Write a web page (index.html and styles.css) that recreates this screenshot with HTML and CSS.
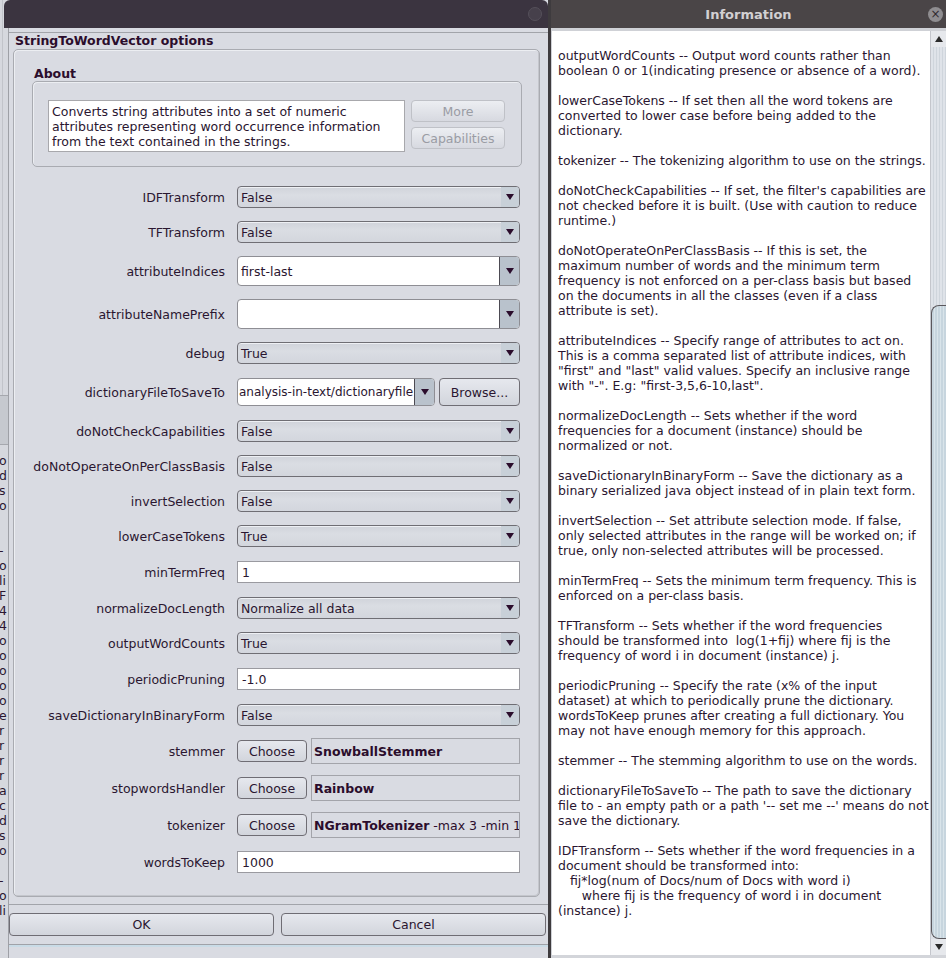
FILE: index.html
```html
<!DOCTYPE html>
<html>
<head>
<meta charset="utf-8">
<title>StringToWordVector options</title>
<link rel="stylesheet" href="styles.css">
</head>
<body>
<div class="screen">
  <div class="strip">
    <div class="strip-top"></div>
    <div class="strip-mid"></div>
    <div class="strip-text">o
d
s
o


-
o
li
F
4
4
o
o
o
o
o
e
r
r
r
r
a
c
d
s
o

-
o
li</div>
  </div>

  <div class="dialog">
    <div class="titlebar"><span class="tb-close"></span></div>
    <div class="dlg-body">
      <div class="opt-title">StringToWordVector options</div>
      <div class="panel">
        <div class="about-title">About</div>
        <div class="about-box">
          <div class="about-text">Converts string attributes into a set of numeric<br>attributes representing word occurrence information<br>from the text contained in the strings.</div>
          <div class="about-btns">
            <div class="btn disabled">More</div>
            <div class="btn disabled">Capabilities</div>
          </div>
        </div>

        <div class="props">
          <div class="lbl">IDFTransform</div>
          <div class="combo"><span class="val">False</span><span class="arrow"><i class="tri"></i></span></div>

          <div class="lbl">TFTransform</div>
          <div class="combo"><span class="val">False</span><span class="arrow"><i class="tri"></i></span></div>

          <div class="lbl">attributeIndices</div>
          <div class="ecombo"><span class="val">first-last</span><span class="earrow"><i class="tri"></i></span></div>

          <div class="lbl">attributeNamePrefix</div>
          <div class="ecombo"><span class="val"></span><span class="earrow"><i class="tri"></i></span></div>

          <div class="lbl">debug</div>
          <div class="combo"><span class="val">True</span><span class="arrow"><i class="tri"></i></span></div>

          <div class="lbl">dictionaryFileToSaveTo</div>
          <div class="filerow">
            <div class="ecombo dict"><span class="val clipped"><span class="shift">analysis-in-text/dictionaryfile</span></span><span class="earrow"><i class="tri"></i></span></div>
            <div class="btn browse">Browse...</div>
          </div>

          <div class="lbl">doNotCheckCapabilities</div>
          <div class="combo"><span class="val">False</span><span class="arrow"><i class="tri"></i></span></div>

          <div class="lbl">doNotOperateOnPerClassBasis</div>
          <div class="combo"><span class="val">False</span><span class="arrow"><i class="tri"></i></span></div>

          <div class="lbl">invertSelection</div>
          <div class="combo"><span class="val">False</span><span class="arrow"><i class="tri"></i></span></div>

          <div class="lbl">lowerCaseTokens</div>
          <div class="combo"><span class="val">True</span><span class="arrow"><i class="tri"></i></span></div>

          <div class="lbl">minTermFreq</div>
          <div class="tfield">1</div>

          <div class="lbl">normalizeDocLength</div>
          <div class="combo"><span class="val">Normalize all data</span><span class="arrow"><i class="tri"></i></span></div>

          <div class="lbl">outputWordCounts</div>
          <div class="combo"><span class="val">True</span><span class="arrow"><i class="tri"></i></span></div>

          <div class="lbl">periodicPruning</div>
          <div class="tfield">-1.0</div>

          <div class="lbl">saveDictionaryInBinaryForm</div>
          <div class="combo"><span class="val">False</span><span class="arrow"><i class="tri"></i></span></div>

          <div class="lbl">stemmer</div>
          <div class="chooserow"><div class="btn choose">Choose</div><div class="objlbl"><b>SnowballStemmer</b></div></div>

          <div class="lbl">stopwordsHandler</div>
          <div class="chooserow"><div class="btn choose">Choose</div><div class="objlbl"><b>Rainbow</b></div></div>

          <div class="lbl">tokenizer</div>
          <div class="chooserow"><div class="btn choose">Choose</div><div class="objlbl"><b>NGramTokenizer</b>&nbsp;-max 3 -min 1</div></div>

          <div class="lbl">wordsToKeep</div>
          <div class="tfield">1000</div>
        </div>
      </div>
      <div class="sep"></div>
      <div class="buttons">
        <div class="btn big">OK</div>
        <div class="btn big">Cancel</div>
      </div>
      <div class="bottom-frame"></div>
    </div>
  </div>

  <div class="info">
    <div class="info-title"><span class="info-name">Information</span><span class="info-close">×</span></div>
    <div class="info-body">
      <div class="info-text">outputWordCounts -- Output word counts rather than
boolean 0 or 1(indicating presence or absence of a word).

lowerCaseTokens -- If set then all the word tokens are
converted to lower case before being added to the
dictionary.

tokenizer -- The tokenizing algorithm to use on the strings.

doNotCheckCapabilities -- If set, the filter's capabilities are
not checked before it is built. (Use with caution to reduce
runtime.)

doNotOperateOnPerClassBasis -- If this is set, the
maximum number of words and the minimum term
frequency is not enforced on a per-class basis but based
on the documents in all the classes (even if a class
attribute is set).

attributeIndices -- Specify range of attributes to act on.
This is a comma separated list of attribute indices, with
"first" and "last" valid values. Specify an inclusive range
with "-". E.g: "first-3,5,6-10,last".

normalizeDocLength -- Sets whether if the word
frequencies for a document (instance) should be
normalized or not.

saveDictionaryInBinaryForm -- Save the dictionary as a
binary serialized java object instead of in plain text form.

invertSelection -- Set attribute selection mode. If false,
only selected attributes in the range will be worked on; if
true, only non-selected attributes will be processed.

minTermFreq -- Sets the minimum term frequency. This is
enforced on a per-class basis.

TFTransform -- Sets whether if the word frequencies
should be transformed into  log(1+fij) where fij is the
frequency of word i in document (instance) j.

periodicPruning -- Specify the rate (x% of the input
dataset) at which to periodically prune the dictionary.
wordsToKeep prunes after creating a full dictionary. You
may not have enough memory for this approach.

stemmer -- The stemming algorithm to use on the words.

dictionaryFileToSaveTo -- The path to save the dictionary
file to - an empty path or a path '-- set me --' means do not
save the dictionary.

IDFTransform -- Sets whether if the word frequencies in a
document should be transformed into:
   fij*log(num of Docs/num of Docs with word i)
      where fij is the frequency of word i in document
(instance) j.</div>
      <div class="scrollbar">
        <div class="sb-btn"><i class="sb-up"></i></div>
        <div class="sb-track"></div>
        <div class="sb-thumb"></div>
        <div class="sb-btn"><i class="sb-down"></i></div>
      </div>
    </div>
    <div class="info-foot"></div>
  </div>
</div>
</body>
</html>
```

FILE: styles.css
```css
* { box-sizing: border-box; }
html, body { margin: 0; padding: 0; }
body {
  width: 946px; height: 958px; overflow: hidden;
  background: #d4d6dc;
  font-family: "DejaVu Sans", "Noto Sans", sans-serif;
  font-size: 12.5px;
  color: #2a1630;
}
.screen { display: flex; width: 946px; height: 958px; }

/* background window strip */
.strip { width: 8px; flex: none; display: flex; flex-direction: column; background: #d6d8de; overflow: hidden; }
.strip-top { height: 395px; flex: none; border-left: 1px solid #c2c4ca; margin-left: 2px; }
.strip-mid { height: 50px; flex: none; background: #c6c9cf; border-top: 1px solid #a6a8ae; border-bottom: 1px solid #a6a8ae; }
.strip-text { padding-top: 8px; line-height: 15px; white-space: pre; margin-left: -1px; color: #2a1630; }

/* left dialog */
.dialog { width: 540px; flex: none; display: flex; flex-direction: column; background: #d9dbe2; }
.titlebar {
  height: 28px; flex: none;
  background: #3b3440;
  border-radius: 6px 6px 0 0;
  display: flex; align-items: center; justify-content: flex-end;
  padding-right: 6px;
  margin-left: -4px;
}
.tb-close { width: 14px; height: 14px; border-radius: 50%; border: 1px solid #55505a; background: #46404b; }
.dlg-body { flex: 1; display: flex; flex-direction: column; border-left: 1px solid #9ea0a6; }
.opt-title {
  margin-top: 4px; border-top: 1px solid #a2a4aa;
  height: 17px; line-height: 16px; padding-left: 6px;
  font-weight: bold; color: #2b0d2c;
}
.panel {
  height: 848px; margin-left: 4px; width: 527px;
  border: 1px solid #a9abb1; border-radius: 5px;
  box-shadow: inset 1px 1px 0 #eceef2, inset -1px -1px 0 #c4c6cc;
  display: flex; flex-direction: column;
}
.about-title { margin-top: 17px; margin-left: 20px; font-weight: bold; color: #2b0d2c; line-height: 14px; height: 14px; }
.about-box {
  margin-top: 0; margin-left: 18px; width: 490px; height: 86px;
  border: 1px solid #a9abb1; border-radius: 5px;
  box-shadow: inset 1px 1px 0 #eceef2;
  display: flex; align-items: flex-start;
  padding: 18px 0 0 15px;
}
.about-text {
  width: 357px; height: 52px; background: #fff;
  border: 1px solid #a8a8ac;
  padding: 3px 3px; line-height: 15px; color: #2a1630;
  white-space: nowrap; overflow: hidden;
}
.about-btns { margin-left: 6px; display: flex; flex-direction: column; gap: 5px; }
.btn {
  display: flex; align-items: center; justify-content: center;
  border: 1px solid #6f6d74; border-radius: 4px;
  background: linear-gradient(#e6e8ee, #d2d5dc);
  color: #2a1630;
}
.btn.disabled { width: 94px; height: 22px; border: 1px solid #bfc1c7; color: #9a9ca4; background: linear-gradient(#eceef2, #d7d9e0); }

.props {
  margin-top: 19px;
  display: grid;
  grid-template-columns: 211px 283px;
  column-gap: 12px;
  row-gap: 13px;
  align-items: center;
}
.lbl { text-align: right; color: #2a1630; white-space: nowrap; }
.val { flex: 1; padding-left: 3px; white-space: nowrap; overflow: hidden; }
.combo {
  height: 22px; display: flex; align-items: center;
  border: 1px solid #6f6e74; border-radius: 4px;
  background: linear-gradient(#d0d3da, #dadde3 40%, #d3d6dd);
  box-shadow: inset 0 1px 0 #eef0f4;
}
.arrow { width: 18px; height: 100%; display: flex; align-items: center; justify-content: center; background: #c8d0d8; border-radius: 0 3px 3px 0; }
.ecombo {
  height: 30px; display: flex; align-items: stretch;
  border: 1px solid #8e8e94; border-radius: 4px; background: #fff;
}
.ecombo .val { display: flex; align-items: center; }
.earrow {
  width: 20px; display: flex; align-items: center; justify-content: center;
  background: #b9c2cc; border-left: 1px solid #4c4a52; border-radius: 0 3px 3px 0;
}
.tri { display: block; width: 0; height: 0; border-left: 4px solid transparent; border-right: 4px solid transparent; border-top: 6px solid #2b0d2c; }
.filerow { display: flex; gap: 4px; align-items: center; height: 30px; }
.ecombo.dict { width: 198px; height: 28px; }
.clipped { padding-left: 0; font-size: 12px; }
.shift { margin-left: 1px; }
.btn.browse { width: 81px; height: 28px; }
.tfield {
  height: 22px; margin: 1px 0; background: #fff; border: 1px solid #9a9aa0;
  padding-left: 4px; display: flex; align-items: center;
}
.chooserow { display: flex; gap: 4px; align-items: center; height: 24px; }
.btn.choose { width: 70px; height: 22px; }
.objlbl {
  flex: 1; height: 26px; border: 1px solid #a3a4aa; background: #d9dbe2;
  display: flex; align-items: center; padding-left: 2px;
  white-space: nowrap; overflow: hidden; color: #2b0d2c;
}

.sep { margin-top: 7px; height: 1px; background: #a2a4aa; }
.buttons { margin-top: 8px; display: flex; gap: 7px; }
.btn.big { width: 265px; height: 23px; }
.bottom-frame { margin-top: 8px; height: 3px; background: #c9dbe6; border-top: 1px solid #a0a2a8; }

/* info window */
.info { width: 398px; flex: none; display: flex; flex-direction: column; border-left: 3px solid #3e3b3e; background: #cfd1d6; }
.info-title {
  height: 28px; flex: none; background: #4a4547;
  display: flex; align-items: center; justify-content: center; position: relative;
}
.info-name { font-weight: bold; font-size: 13px; color: #d2d0d2; }
.info-close {
  position: absolute; right: 3px; top: 7px;
  width: 15px; height: 15px; border-radius: 50%; background: #8f8d90;
  color: #2e2a2e; font-size: 12px; line-height: 15px; text-align: center;
}
.info-body { height: 924px; flex: none; margin-top: 3px; display: flex; background: #fff; margin-left: 1px; }
.info-text {
  flex: 1; padding: 17px 0 0 6px;
  white-space: pre; line-height: 15px; color: #2a1630;
  overflow: hidden;
}
.scrollbar { width: 16px; flex: none; display: flex; flex-direction: column; background: #dde1e7; border-left: 1px solid #c4c6cc; }
.sb-btn { height: 16px; flex: none; display: flex; align-items: center; justify-content: center; background: #e6e8ec; }
.sb-up { display: block; width: 0; height: 0; border-left: 4px solid transparent; border-right: 4px solid transparent; border-bottom: 6px solid #2a2a2a; }
.sb-down { display: block; width: 0; height: 0; border-left: 4px solid transparent; border-right: 4px solid transparent; border-top: 6px solid #2a2a2a; }
.sb-track { height: 258px; flex: none; background: repeating-linear-gradient(90deg, #dfe3e9 0 2px, #cfd5dc 2px 3px); }
.sb-thumb {
  flex: 1; background: repeating-linear-gradient(90deg, #c7d5de 0 2px, #d9e4ea 2px 3px);
  border: 1px solid #5a575c; border-radius: 8px 0 0 8px; border-right: none;
}
.info-foot { flex: 1; background: #d3d5da; }
```
